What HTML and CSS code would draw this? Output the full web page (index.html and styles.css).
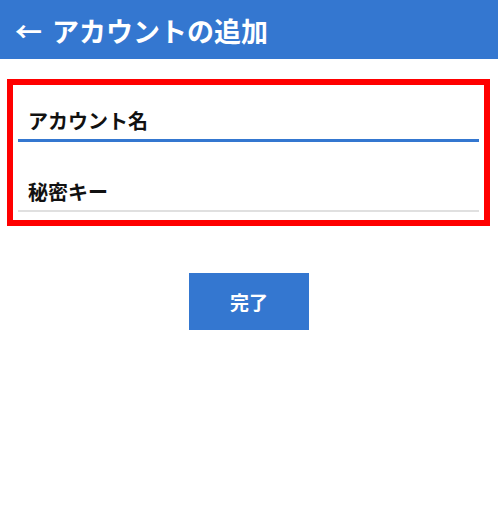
FILE: index.html
```html
<!DOCTYPE html>
<html lang="ja">
<head>
<meta charset="utf-8">
<link rel="stylesheet" href="styles.css">
</head>
<body>
<header class="appbar">
  <span class="back">←</span>
  <span class="title">アカウントの追加</span>
</header>
<main>
  <section class="form-box">
    <div class="field field-active">アカウント名</div>
    <div class="field field-idle">秘密キー</div>
  </section>
  <div class="actions">
    <button class="done">完了</button>
  </div>
</main>
</body>
</html>
```
FILE: styles.css
```css
html, body {
  margin: 0;
  padding: 0;
  background: #ffffff;
}
body {
  font-family: "Noto Sans CJK JP", "Noto Sans", sans-serif;
  color: #111111;
}
.appbar {
  height: 59px;
  background: #3477d0;
  color: #ffffff;
  display: flex;
  align-items: center;
  padding-left: 15px;
  padding-top: 1px;
  box-sizing: border-box;
  font-size: 27px;
  font-weight: 700;
}
.back {
  margin-right: 10px;
}
.form-box {
  margin: 20px 8px 0 7px;
  border: 6px solid #ff0000;
  padding: 0 5px 8px;
}
.field {
  font-size: 20px;
  font-weight: 700;
  line-height: 36px;
  height: 36px;
  padding-left: 10px;
}
.field-active {
  margin-top: 18px;
  border-bottom: 3px solid #3477d0;
}
.field-idle {
  margin-top: 32px;
  border-bottom: 2px solid #e0e0e0;
}
.actions {
  display: flex;
  justify-content: center;
  margin-top: 47px;
}
.done {
  width: 120px;
  height: 57px;
  background: #3477d0;
  color: #ffffff;
  border: none;
  font-family: "Noto Sans CJK JP", sans-serif;
  font-size: 19px;
  font-weight: 700;
  padding: 0;
}
```
